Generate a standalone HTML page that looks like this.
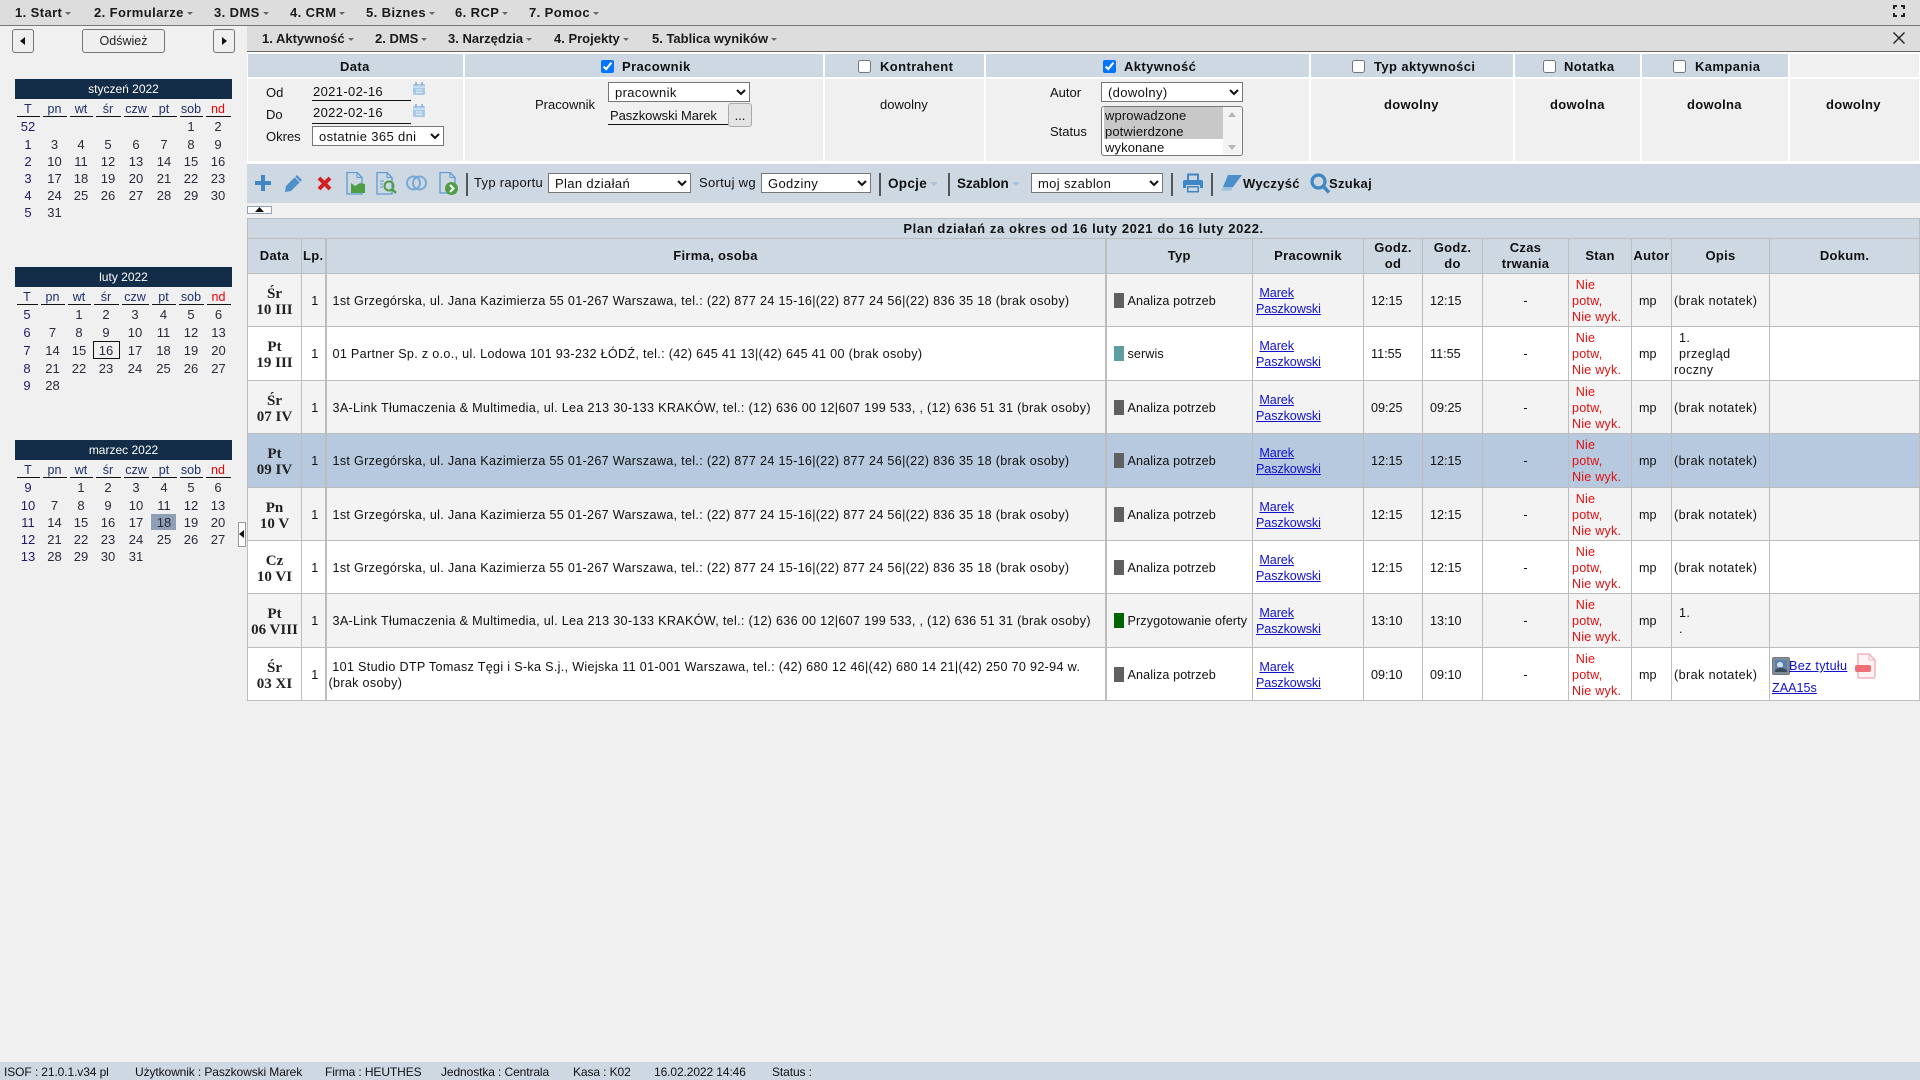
<!DOCTYPE html>
<html lang="pl"><head><meta charset="utf-8"><title>ISOF</title>
<style>
html,body{margin:0;padding:0;width:1920px;height:1080px;overflow:hidden;background:#f0f0f0;color:#111;font:13px/16px "Liberation Sans",sans-serif}
.t{position:absolute;white-space:nowrap;line-height:16px}
.b{font-weight:bold}
.r{position:absolute}
.m{position:absolute;white-space:nowrap;font-weight:bold;font-size:13px;line-height:16px;color:#1a1a1a}
.m:after{content:"";display:inline-block;margin-left:3px;vertical-align:2px;border:3px solid transparent;border-top:3px solid #666;border-bottom:0}
.m1{letter-spacing:.4px}
.h{position:absolute;top:54px;height:23px;background:#cdd8e3}
.c{position:absolute;top:79px;height:82px;background:#f0f0f0}
.ck{position:absolute;margin:0;top:60px;width:13px;height:13px}
.ht{position:absolute;top:59px;font-weight:bold;line-height:16px;white-space:nowrap;font-size:13px;letter-spacing:.4px}
select{position:absolute;margin:0;font:13px "Liberation Sans",sans-serif;background:#fff;box-sizing:border-box;padding-left:2px;letter-spacing:.35px;color:#111}
.btn{position:absolute;box-sizing:border-box;background:#efefef;border:1px solid #767676;border-radius:3px;text-align:center}
.sep{position:absolute;top:173px;height:23px;width:2px;background:#555}
.car:after{content:"";position:absolute;margin-left:3px;top:6px;border:4px solid transparent;border-top:4px solid #a9c3dc;border-bottom:0}
table.cal{position:absolute;left:15px;width:217px;border-collapse:collapse;table-layout:fixed;font-size:13px;line-height:16px;text-align:center;color:#2a2a3a}
table.cal td{padding:0;height:17px}
table.cal tr.a td{height:19px}
table.cal th{padding:0;font-weight:normal;font-size:12.5px;height:17px;color:#1f2f6a;background:linear-gradient(#111,#111) center bottom/calc(100% - 3px) 1px no-repeat}
table.cal th:last-child{color:#e00}
table.cal td:first-child{color:#221a68}
.ch{position:absolute;left:15px;width:217px;height:20px;background:#132c48;color:#fff;text-align:center;line-height:20px;font-size:12px}
table.g{position:absolute;left:247px;top:218px;width:1672px;border-collapse:collapse;table-layout:fixed;font-size:12.6px;line-height:16px;background:#fff}
table.g th,table.g td{border:1px solid #bdbdbd;padding:0;overflow:hidden;white-space:nowrap}
table.g td{padding-top:1px}
table.g th{background:#cdd8e3;font-size:13px;font-weight:bold;text-align:center;color:#111;letter-spacing:.3px}
table.g th.ti{letter-spacing:.6px}
table.g tr.o td{background:#f3f3f3}
table.g tr.s td{background:#b7c9df}
table.g tr>.d{text-align:center;font:bold 15px/16px "Liberation Serif",serif;color:#222;padding-top:3px}
table.g .l{text-align:center;padding-left:3px}
table.g .f{padding-left:6px;border-left:2px solid #bdbdbd;border-right:2px solid #bdbdbd;white-space:normal;letter-spacing:.31px}
table.g .ty{padding-left:7px;letter-spacing:.1px}
.sw{display:inline-block;width:10px;height:15px;background:#606060;vertical-align:-3px;margin-right:4px}
table.g .p{padding-left:3px;letter-spacing:-.1px}
table.g a{color:#11c;text-decoration:underline}
table.g .q{padding-left:7px}
table.g .n{text-align:center}
table.g .st{padding-left:3px;color:#e01010;line-height:16px;letter-spacing:.2px}
table.g .au{padding-left:7px}
table.g .op{padding-left:2px;letter-spacing:.4px}
table.g .op i{margin-left:5px}
.sb{font-size:12px;top:1064px;letter-spacing:-.1px}
</style></head><body>

<!-- top bars -->
<div class="r" style="left:0;top:0;width:1920px;height:25px;background:#ddd;border-bottom:1px solid #777"></div>
<div class="m m1" style="left:15px;top:5px">1. Start</div>
<div class="m m1" style="left:94px;top:5px">2. Formularze</div>
<div class="m m1" style="left:214px;top:5px">3. DMS</div>
<div class="m m1" style="left:290px;top:5px">4. CRM</div>
<div class="m m1" style="left:366px;top:5px">5. Biznes</div>
<div class="m m1" style="left:455px;top:5px">6. RCP</div>
<div class="m m1" style="left:529px;top:5px">7. Pomoc</div>
<svg class="r" style="left:1893px;top:5px" width="12" height="12" viewBox="0 0 12 12" fill="none" stroke="#222" stroke-width="2"><path d="M1 4V1h3M8 1h3v3M11 8v3H8M4 11H1V8"/></svg>

<div class="r" style="left:247px;top:26px;width:1673px;height:25px;background:#ddd;border-bottom:1px solid #666"></div>
<div class="m" style="left:262px;top:31px">1. Aktywność</div>
<div class="m" style="left:375px;top:31px">2. DMS</div>
<div class="m" style="left:448px;top:31px">3. Narzędzia</div>
<div class="m" style="left:554px;top:31px">4. Projekty</div>
<div class="m" style="left:652px;top:31px">5. Tablica wyników</div>
<svg class="r" style="left:1893px;top:32px" width="12" height="12" viewBox="0 0 12 12" stroke="#222" stroke-width="1.4"><path d="M.5.5l11 11M11.500.5l-11 11"/></svg>

<!-- left nav -->
<div class="btn" style="left:12px;top:29px;width:22px;height:24px"><svg width="6" height="8" style="margin-top:7px" viewBox="0 0 6 8"><path d="M5 0v8L0 4z" fill="#111"/></svg></div>
<div class="btn" style="left:82px;top:29px;width:83px;height:24px;line-height:22px;font-size:12.5px;color:#222">Odśwież</div>
<div class="btn" style="left:213px;top:29px;width:22px;height:24px"><svg width="6" height="8" style="margin-top:7px" viewBox="0 0 6 8"><path d="M1 0v8l5-4z" fill="#111"/></svg></div>

<div class="ch" style="top:79px">styczeń 2022</div>
<table class="cal" style="top:100px"><colgroup><col style="width:26px"><col style="width:27px"><col style="width:26px"><col style="width:28px"><col style="width:28px"><col style="width:28px"><col style="width:26px"><col style="width:28px"></colgroup>
<tr><th>T</th><th>pn</th><th>wt</th><th>śr</th><th>czw</th><th>pt</th><th>sob</th><th>nd</th></tr>
<tr class="a"><td>52</td><td></td><td></td><td></td><td></td><td></td><td>1</td><td>2</td></tr>
<tr><td>1</td><td>3</td><td>4</td><td>5</td><td>6</td><td>7</td><td>8</td><td>9</td></tr>
<tr><td>2</td><td>10</td><td>11</td><td>12</td><td>13</td><td>14</td><td>15</td><td>16</td></tr>
<tr><td>3</td><td>17</td><td>18</td><td>19</td><td>20</td><td>21</td><td>22</td><td>23</td></tr>
<tr><td>4</td><td>24</td><td>25</td><td>26</td><td>27</td><td>28</td><td>29</td><td>30</td></tr>
<tr><td>5</td><td>31</td><td></td><td></td><td></td><td></td><td></td><td></td></tr></table>

<div class="ch" style="top:267px">luty 2022</div>
<table class="cal" style="top:288px"><colgroup><col style="width:24px"><col style="width:27px"><col style="width:26px"><col style="width:28px"><col style="width:30px"><col style="width:27px"><col style="width:28px"><col style="width:27px"></colgroup>
<tr><th>T</th><th>pn</th><th>wt</th><th>śr</th><th>czw</th><th>pt</th><th>sob</th><th>nd</th></tr>
<tr class="a"><td>5</td><td></td><td>1</td><td>2</td><td>3</td><td>4</td><td>5</td><td>6</td></tr>
<tr><td>6</td><td>7</td><td>8</td><td>9</td><td>10</td><td>11</td><td>12</td><td>13</td></tr>
<tr class="a"><td>7</td><td>14</td><td>15</td><td>16</td><td>17</td><td>18</td><td>19</td><td>20</td></tr>
<tr><td>8</td><td>21</td><td>22</td><td>23</td><td>24</td><td>25</td><td>26</td><td>27</td></tr>
<tr><td>9</td><td>28</td><td></td><td></td><td></td><td></td><td></td><td></td></tr></table>
<div class="r" style="left:93px;top:341px;width:25px;height:16px;border:1px solid #111"></div>

<div class="ch" style="top:440px">marzec 2022</div>
<div class="r" style="left:151px;top:514px;width:25px;height:16px;background:#8e9fb6"></div>
<table class="cal" style="top:461px"><colgroup><col style="width:26px"><col style="width:27px"><col style="width:26px"><col style="width:28px"><col style="width:28px"><col style="width:28px"><col style="width:26px"><col style="width:28px"></colgroup>
<tr><th>T</th><th>pn</th><th>wt</th><th>śr</th><th>czw</th><th>pt</th><th>sob</th><th>nd</th></tr>
<tr class="a"><td>9</td><td></td><td>1</td><td>2</td><td>3</td><td>4</td><td>5</td><td>6</td></tr>
<tr><td>10</td><td>7</td><td>8</td><td>9</td><td>10</td><td>11</td><td>12</td><td>13</td></tr>
<tr><td>11</td><td>14</td><td>15</td><td>16</td><td>17</td><td>18</td><td>19</td><td>20</td></tr>
<tr><td>12</td><td>21</td><td>22</td><td>23</td><td>24</td><td>25</td><td>26</td><td>27</td></tr>
<tr><td>13</td><td>28</td><td>29</td><td>30</td><td>31</td><td></td><td></td><td></td></tr></table>

<div class="r" style="left:238px;top:522px;width:6px;height:23px;background:#fff;border:1px solid #999"><svg class="r" style="left:0;top:7px" width="6" height="8" viewBox="0 0 6 8"><path d="M5 0v8L0 4z" fill="#111"/></svg></div>

<!-- filter panel -->
<div class="r" style="left:247px;top:52px;width:1673px;height:112px;background:#fff"></div>
<div class="h" style="left:248px;width:215px"></div><div class="c" style="left:248px;width:215px"></div>
<div class="h" style="left:465px;width:358px"></div><div class="c" style="left:465px;width:358px"></div>
<div class="h" style="left:825px;width:159px"></div><div class="c" style="left:825px;width:159px"></div>
<div class="h" style="left:986px;width:323px"></div><div class="c" style="left:986px;width:323px"></div>
<div class="h" style="left:1311px;width:202px"></div><div class="c" style="left:1311px;width:202px"></div>
<div class="h" style="left:1515px;width:125px"></div><div class="c" style="left:1515px;width:125px"></div>
<div class="h" style="left:1642px;width:146px"></div><div class="c" style="left:1642px;width:146px"></div>
<div class="h" style="left:1790px;width:129px;background:#f0f0f0"></div><div class="c" style="left:1790px;width:129px"></div>

<div class="ht" style="left:340px">Data</div>
<input class="ck" type="checkbox" checked style="left:601px"><div class="ht" style="left:622px">Pracownik</div>
<input class="ck" type="checkbox" style="left:858px"><div class="ht" style="left:880px">Kontrahent</div>
<input class="ck" type="checkbox" checked style="left:1103px"><div class="ht" style="left:1124px">Aktywność</div>
<input class="ck" type="checkbox" style="left:1352px"><div class="ht" style="left:1374px">Typ aktywności</div>
<input class="ck" type="checkbox" style="left:1543px"><div class="ht" style="left:1564px">Notatka</div>
<input class="ck" type="checkbox" style="left:1673px"><div class="ht" style="left:1695px">Kampania</div>

<div class="t" style="left:266px;top:85px">Od</div>
<div class="t" style="left:313px;top:84px;letter-spacing:.35px">2021-02-16</div>
<div class="r" style="left:312px;top:100px;width:99px;height:1px;background:#111"></div>
<div class="t" style="left:266px;top:107px">Do</div>
<div class="t" style="left:313px;top:105px;letter-spacing:.35px">2022-02-16</div>
<div class="r" style="left:312px;top:123px;width:99px;height:1px;background:#111"></div>
<svg class="r" style="left:413px;top:82px" width="12" height="13" viewBox="0 0 12 13"><rect y="2" width="12" height="11" rx="1" fill="#a9c9e8"/><path d="M0 5h12M3 8h6M3 10.500h6" stroke="#e8f1fa"/><path d="M3 0v3M9 0v3" stroke="#7fa9cf" stroke-width="1.500"/></svg>
<svg class="r" style="left:413px;top:104px" width="12" height="13" viewBox="0 0 12 13"><rect y="2" width="12" height="11" rx="1" fill="#a9c9e8"/><path d="M0 5h12M3 8h6M3 10.500h6" stroke="#e8f1fa"/><path d="M3 0v3M9 0v3" stroke="#7fa9cf" stroke-width="1.500"/></svg>
<div class="t" style="left:266px;top:129px">Okres</div>
<select style="left:312px;top:126px;width:132px;height:20px"><option>ostatnie 365 dni</option></select>

<div class="t" style="left:535px;top:97px">Pracownik</div>
<select style="left:608px;top:82px;width:142px;height:20px"><option>pracownik</option></select>
<div class="t" style="left:610px;top:108px;letter-spacing:-.05px">Paszkowski Marek</div>
<div class="r" style="left:608px;top:124px;width:120px;height:1px;background:#111"></div>
<div class="btn" style="left:728px;top:103px;width:24px;height:24px;background:#e4e4e4;border-color:#aaa;line-height:24px">...</div>

<div class="t" style="left:880px;top:97px">dowolny</div>

<div class="t" style="left:1050px;top:85px">Autor</div>
<select style="left:1101px;top:82px;width:142px;height:20px"><option>(dowolny)</option></select>
<div class="t" style="left:1050px;top:124px">Status</div>
<div class="r" style="left:1101px;top:106px;width:140px;height:48px;background:#fff;border:1px solid #767676;border-radius:3px"></div>
<div class="r" style="left:1104px;top:107px;width:119px;height:32px;background:#c8c8c8"></div>
<div class="r" style="left:1223px;top:107px;width:18px;height:47px;background:#f3f3f3"></div>
<svg class="r" style="left:1228px;top:112px" width="8" height="38" viewBox="0 0 8 38" fill="#b5b5b5"><path d="M4 0l4 5H0zM0 33h8l-4 5z"/></svg>
<div class="t" style="left:1105px;top:108px;letter-spacing:.1px">wprowadzone</div>
<div class="t" style="left:1105px;top:124px;letter-spacing:.1px">potwierdzone</div>
<div class="t" style="left:1105px;top:140px;letter-spacing:.1px">wykonane</div>

<div class="t b" style="left:1384px;top:97px;letter-spacing:.3px">dowolny</div>
<div class="t b" style="left:1550px;top:97px;letter-spacing:.3px">dowolna</div>
<div class="t b" style="left:1687px;top:97px;letter-spacing:.3px">dowolna</div>
<div class="t b" style="left:1826px;top:97px;letter-spacing:.3px">dowolny</div>

<!-- toolbar -->
<div class="r" style="left:247px;top:164px;width:1673px;height:39px;background:#cdd8e3"></div>
<svg class="r" style="left:254px;top:174px" width="18" height="18" viewBox="0 0 18 18"><path d="M7 1h4v6h6v4h-6v6H7v-6H1V7h6z" fill="#3e86c4"/></svg>
<svg class="r" style="left:284px;top:174px" width="19" height="19" viewBox="0 0 19 19"><path d="M13 1l5 5L7 17l-6 1 1-6z" fill="#4f8ec9"/><path d="M11 3l5 5" stroke="#cdd8e3"/></svg>
<svg class="r" style="left:317px;top:176px" width="15" height="15" viewBox="0 0 15 15"><path d="M2 2l11 11M13 2L2 13" stroke="#d41f1f" stroke-width="4"/></svg>
<svg class="r" style="left:346px;top:172px" width="20" height="23" viewBox="0 0 20 23" fill="none"><path d="M1 .5h10l5 5V22H1z" stroke="#5c9bd3" stroke-width="1.300"/><path d="M11 .5v5h5" stroke="#5c9bd3"/><path d="M5 11l4 3 5-3 5 1v9H5z" fill="#4f9d45"/></svg>
<svg class="r" style="left:376px;top:172px" width="21" height="23" viewBox="0 0 21 23" fill="none"><path d="M1 .5h10l5 5V22H1z" stroke="#5c9bd3" stroke-width="1.300"/><path d="M11 .5v5h5M4 9h4M4 12h3M4 15h3" stroke="#5c9bd3"/><circle cx="13" cy="14" r="4.500" stroke="#4f9d45" stroke-width="2"/><path d="M16 17l4 4" stroke="#4f9d45" stroke-width="2.500"/></svg>
<svg class="r" style="left:406px;top:175px" width="21" height="16" viewBox="0 0 21 16" fill="none" stroke="#76a8d8" stroke-width="2"><circle cx="7.500" cy="8" r="6.500"/><circle cx="13.500" cy="8" r="6.500"/></svg>
<svg class="r" style="left:439px;top:172px" width="20" height="24" viewBox="0 0 20 24" fill="none"><path d="M1 .5h10l5 5V21H1z" stroke="#5c9bd3" stroke-width="1.300"/><path d="M11 .5v5h5" stroke="#5c9bd3"/><circle cx="12.500" cy="16.500" r="6.500" fill="#4f9d45"/><path d="M11 13l3.500 3.500L11 20" stroke="#fff" stroke-width="2"/></svg>
<div class="sep" style="left:466px"></div>
<div class="t" style="left:474px;top:175px;letter-spacing:.3px">Typ raportu</div>
<select style="left:548px;top:173px;width:143px;height:20px"><option>Plan działań</option></select>
<div class="t" style="left:699px;top:175px;letter-spacing:.3px">Sortuj wg</div>
<select style="left:761px;top:173px;width:110px;height:20px"><option>Godziny</option></select>
<div class="sep" style="left:879px"></div>
<div class="t b car" style="left:888px;top:176px;font-size:13.5px;letter-spacing:.3px">Opcje</div>
<div class="sep" style="left:948px"></div>
<div class="t b car" style="left:957px;top:176px;font-size:13.5px">Szablon</div>
<select style="left:1031px;top:173px;width:132px;height:20px"><option>moj szablon</option></select>
<div class="sep" style="left:1171px"></div>
<svg class="r" style="left:1183px;top:173px" width="20" height="20" viewBox="0 0 20 20"><path d="M4 7V1.500A1 1 0 0 1 5 .5h10a1 1 0 0 1 1 1V7h-2V2.500H6V7z" fill="#3e86c4"/><path d="M2 7h16a2 2 0 0 1 2 2v6h-3v-3H3v3H0V9a2 2 0 0 1 2-2z" fill="#3e86c4"/><path d="M4 13h12v6.500H4zM5.500 14.500v3.500h9v-3.500z" fill="#3e86c4" fill-rule="evenodd"/></svg>
<div class="sep" style="left:1211px"></div>
<svg class="r" style="left:1220px;top:175px" width="22" height="16" viewBox="0 0 22 16"><path d="M8 0h14L13 12H3z" fill="#4c8ec9"/><path d="M3 12h10l-2 3.500H1z" fill="#9cc0e2"/></svg>
<div class="t b" style="left:1243px;top:176px;letter-spacing:.3px">Wyczyść</div>
<svg class="r" style="left:1310px;top:173px" width="21" height="21" viewBox="0 0 21 21" fill="none" stroke="#3e86c4"><circle cx="8.500" cy="8.500" r="6.500" stroke-width="3.200"/><path d="M13 13l6 6.500" stroke-width="3.500"/></svg>
<div class="t b" style="left:1329px;top:176px;letter-spacing:.3px">Szukaj</div>

<div class="r" style="left:247px;top:206px;width:23px;height:6px;background:#fff;border:1px solid #8ea1b8"><svg class="r" style="left:7px;top:0" width="9" height="5" viewBox="0 0 9 5"><path d="M4.500 0L9 5H0z" fill="#111"/></svg></div>

<!-- table -->
<table class="g">
<colgroup><col style="width:54px"><col style="width:24px"><col style="width:780px"><col style="width:147px"><col style="width:111px"><col style="width:59px"><col style="width:60px"><col style="width:86px"><col style="width:63px"><col style="width:40px"><col style="width:98px"><col style="width:150px"></colgroup>
<tr style="height:20px"><th class="ti" colspan="12">Plan działań za okres od 16 luty 2021 do 16 luty 2022.</th></tr>
<tr style="height:35px"><th>Data</th><th>Lp.</th><th style="border-left:2px solid #bdbdbd;border-right:2px solid #bdbdbd">Firma, osoba</th><th>Typ</th><th>Pracownik</th><th>Godz.<br>od</th><th>Godz.<br>do</th><th>Czas<br>trwania</th><th>Stan</th><th>Autor</th><th>Opis</th><th>Dokum.</th></tr>
<tr class="o" style="height:53px"><td class="d">Śr<br>10 III</td><td class="l">1</td><td class="f">1st Grzegórska, ul. Jana Kazimierza 55 01-267 Warszawa, tel.: (22) 877 24 15-16|(22) 877 24 56|(22) 836 35 18 (brak osoby)</td><td class="ty"><span class="sw"></span>Analiza potrzeb</td><td class="p">&nbsp;<a>Marek</a><br><a>Paszkowski</a></td><td class="q">12:15</td><td class="q">12:15</td><td class="n">-</td><td class="st">&nbsp;Nie<br>potw,<br>Nie wyk.</td><td class="au">mp</td><td class="op">(brak notatek)</td><td></td></tr>
<tr style="height:54px"><td class="d">Pt<br>19 III</td><td class="l">1</td><td class="f">01 Partner Sp. z o.o., ul. Lodowa 101 93-232 ŁÓDŹ, tel.: (42) 645 41 13|(42) 645 41 00 (brak osoby)</td><td class="ty"><span class="sw" style="background:#5f9ea0"></span>serwis</td><td class="p">&nbsp;<a>Marek</a><br><a>Paszkowski</a></td><td class="q">11:55</td><td class="q">11:55</td><td class="n">-</td><td class="st">&nbsp;Nie<br>potw,<br>Nie wyk.</td><td class="au">mp</td><td class="op"><i></i>1.<br><i></i>przegląd<br>roczny</td><td></td></tr>
<tr class="o" style="height:53px"><td class="d">Śr<br>07 IV</td><td class="l">1</td><td class="f">3A-Link Tłumaczenia &amp; Multimedia, ul. Lea 213 30-133 KRAKÓW, tel.: (12) 636 00 12|607 199 533, , (12) 636 51 31 (brak osoby)</td><td class="ty"><span class="sw"></span>Analiza potrzeb</td><td class="p">&nbsp;<a>Marek</a><br><a>Paszkowski</a></td><td class="q">09:25</td><td class="q">09:25</td><td class="n">-</td><td class="st">&nbsp;Nie<br>potw,<br>Nie wyk.</td><td class="au">mp</td><td class="op">(brak notatek)</td><td></td></tr>
<tr class="s" style="height:54px"><td class="d">Pt<br>09 IV</td><td class="l">1</td><td class="f">1st Grzegórska, ul. Jana Kazimierza 55 01-267 Warszawa, tel.: (22) 877 24 15-16|(22) 877 24 56|(22) 836 35 18 (brak osoby)</td><td class="ty"><span class="sw"></span>Analiza potrzeb</td><td class="p">&nbsp;<a>Marek</a><br><a>Paszkowski</a></td><td class="q">12:15</td><td class="q">12:15</td><td class="n">-</td><td class="st">&nbsp;Nie<br>potw,<br>Nie wyk.</td><td class="au">mp</td><td class="op">(brak notatek)</td><td></td></tr>
<tr class="o" style="height:53px"><td class="d">Pn<br>10 V</td><td class="l">1</td><td class="f">1st Grzegórska, ul. Jana Kazimierza 55 01-267 Warszawa, tel.: (22) 877 24 15-16|(22) 877 24 56|(22) 836 35 18 (brak osoby)</td><td class="ty"><span class="sw"></span>Analiza potrzeb</td><td class="p">&nbsp;<a>Marek</a><br><a>Paszkowski</a></td><td class="q">12:15</td><td class="q">12:15</td><td class="n">-</td><td class="st">&nbsp;Nie<br>potw,<br>Nie wyk.</td><td class="au">mp</td><td class="op">(brak notatek)</td><td></td></tr>
<tr style="height:53px"><td class="d">Cz<br>10 VI</td><td class="l">1</td><td class="f">1st Grzegórska, ul. Jana Kazimierza 55 01-267 Warszawa, tel.: (22) 877 24 15-16|(22) 877 24 56|(22) 836 35 18 (brak osoby)</td><td class="ty"><span class="sw"></span>Analiza potrzeb</td><td class="p">&nbsp;<a>Marek</a><br><a>Paszkowski</a></td><td class="q">12:15</td><td class="q">12:15</td><td class="n">-</td><td class="st">&nbsp;Nie<br>potw,<br>Nie wyk.</td><td class="au">mp</td><td class="op">(brak notatek)</td><td></td></tr>
<tr class="o" style="height:54px"><td class="d">Pt<br>06 VIII</td><td class="l">1</td><td class="f">3A-Link Tłumaczenia &amp; Multimedia, ul. Lea 213 30-133 KRAKÓW, tel.: (12) 636 00 12|607 199 533, , (12) 636 51 31 (brak osoby)</td><td class="ty"><span class="sw" style="background:#006400"></span>Przygotowanie oferty</td><td class="p">&nbsp;<a>Marek</a><br><a>Paszkowski</a></td><td class="q">13:10</td><td class="q">13:10</td><td class="n">-</td><td class="st">&nbsp;Nie<br>potw,<br>Nie wyk.</td><td class="au">mp</td><td class="op"><i></i>1.<br><i></i>.</td><td></td></tr>
<tr style="height:53px"><td class="d">Śr<br>03 XI</td><td class="l">1</td><td class="f" style="padding-left:2px;padding-right:20px">&nbsp;101 Studio DTP Tomasz Tęgi i S-ka S.j., Wiejska 11 01-001 Warszawa, tel.: (42) 680 12 46|(42) 680 14 21|(42) 250 70 92-94 w. (brak osoby)</td><td class="ty"><span class="sw"></span>Analiza potrzeb</td><td class="p">&nbsp;<a>Marek</a><br><a>Paszkowski</a></td><td class="q">09:10</td><td class="q">09:10</td><td class="n">-</td><td class="st">&nbsp;Nie<br>potw,<br>Nie wyk.</td><td class="au">mp</td><td class="op">(brak notatek)</td><td></td></tr>
</table>
<svg class="r" style="left:1772px;top:657px" width="18" height="18" viewBox="0 0 18 18"><rect x=".5" y=".5" width="17" height="17" rx="1.500" fill="#7d8ea0" stroke="#777"/><rect x="3" y="3" width="12" height="12" fill="#5b7fa8"/><circle cx="8" cy="8" r="3" fill="#cfe0f0"/><path d="M3 13l5-3 7 3v2H3z" fill="#3a4a5c"/></svg>
<div class="t" style="left:1789px;top:658px;color:#11c;text-decoration:underline;font-size:12.6px;letter-spacing:.3px">Bez tytułu</div>
<svg class="r" style="left:1855px;top:653px" width="22" height="26" viewBox="0 0 22 26" fill="none" opacity=".8"><path d="M3 1h11l6 6v16a2 2 0 0 1-2 2H5a2 2 0 0 1-2-2z" fill="#fdf1f2" stroke="#f0a0a8" stroke-width="1.500"/><path d="M14 1v6h6" stroke="#f0a0a8"/><rect y="12" width="16" height="7" rx="2" fill="#ea4a55"/></svg>
<div class="t" style="left:1772px;top:680px;color:#11c;text-decoration:underline;font-size:12.6px">ZAA15s</div>

<!-- status bar -->
<div class="r" style="left:0;top:1062px;width:1920px;height:18px;background:#cdd8e3"></div>
<div class="t sb" style="left:4px">ISOF : 21.0.1.v34 pl</div>
<div class="t sb" style="left:135px">Użytkownik : Paszkowski Marek</div>
<div class="t sb" style="left:325px">Firma : HEUTHES</div>
<div class="t sb" style="left:441px">Jednostka : Centrala</div>
<div class="t sb" style="left:573px">Kasa : K02</div>
<div class="t sb" style="left:654px">16.02.2022 14:46</div>
<div class="t sb" style="left:772px">Status :</div>
</body></html>
